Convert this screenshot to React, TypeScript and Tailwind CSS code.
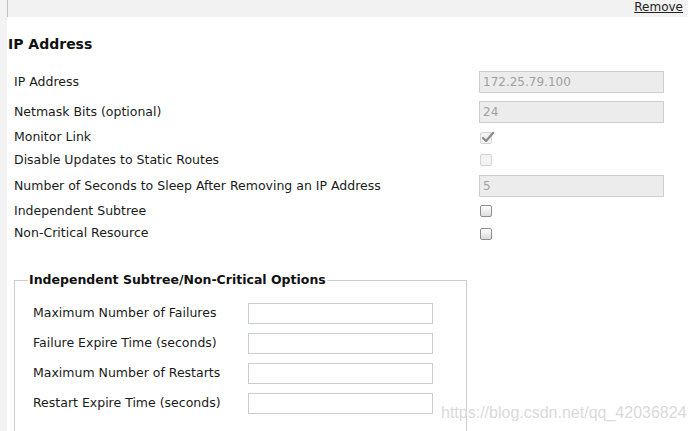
import React from "react";

const font = { fontFamily: '"DejaVu Sans", "Liberation Sans", sans-serif' };

function DisabledInput({ value }: { value: string }) {
  return (
    <div className="w-[185px] h-[22px] bg-[#ececec] border border-[#cdcdcd] flex items-center pl-[3px] text-[12px] text-[#a0a0a0]">
      {value}
    </div>
  );
}

function DisabledCheckbox({ checked }: { checked?: boolean }) {
  return (
    <div className="relative w-[12px] h-[12px] ml-[1px] rounded-[2px] border border-[#d4d4d4] bg-[#f3f3f3]">
      {checked && (
        <svg className="absolute left-[0px] top-[-3px]" width="14" height="14" viewBox="0 0 14 14">
          <path d="M2 8 L5 11 L12 3" fill="none" stroke="#8c8c8c" strokeWidth="2.4" strokeLinecap="round" strokeLinejoin="round" />
        </svg>
      )}
    </div>
  );
}

function Checkbox() {
  return (
    <div className="w-[12px] h-[12px] ml-[1px] rounded-[2px] border border-[#8e8e8e] bg-gradient-to-b from-[#ffffff] to-[#dcdcdc]" />
  );
}

function Row({ label, h, children }: { label: string; h: string; children: React.ReactNode }) {
  return (
    <div className={`flex items-center shrink-0 ${h}`}>
      <div className="w-[465px] text-[12.5px] text-[#1a1a1a]">{label}</div>
      {children}
    </div>
  );
}

function FieldRow({ label }: { label: string }) {
  return (
    <div className="flex items-center h-[30px] pl-[5px]">
      <div className="w-[215px] text-[12.5px] text-[#1a1a1a]">{label}</div>
      <div className="w-[185px] h-[21px] bg-white border border-[#c9cdd1]" />
    </div>
  );
}

export default function App() {
  return (
    <div className="relative w-[693px] h-[431px] overflow-hidden bg-white flex" style={font}>
      <div className="w-[7px] h-full bg-[#f3f3f3] shrink-0" />
      <div className="flex-1 block">
        <div className="h-[17px] mr-[5px] bg-[#f2f2f2] border-l border-[#c4c4c4] flex justify-end items-start pr-[5px]">
          <span className="text-[12px] leading-[14px] underline text-[#222]">Remove</span>
        </div>
        <h2 className="mt-[19px] pl-[1px] text-[14px] leading-[17px] font-bold text-[#111]">IP Address</h2>
        <div className="mt-[14px] pl-[7px] flex flex-col">
          <Row label="IP Address" h="h-[30px]">
            <DisabledInput value="172.25.79.100" />
          </Row>
          <Row label="Netmask Bits (optional)" h="h-[30px]">
            <DisabledInput value="24" />
          </Row>
          <Row label="Monitor Link" h="h-[21px]">
            <DisabledCheckbox checked />
          </Row>
          <Row label="Disable Updates to Static Routes" h="h-[24px]">
            <DisabledCheckbox />
          </Row>
          <Row label="Number of Seconds to Sleep After Removing an IP Address" h="h-[28px]">
            <DisabledInput value="5" />
          </Row>
          <Row label="Independent Subtree" h="h-[22px]">
            <Checkbox />
          </Row>
          <Row label="Non-Critical Resource" h="h-[23px]">
            <Checkbox />
          </Row>
        </div>
        <fieldset className="mt-[28px] ml-[7px] w-[453px] h-[200px] border border-[#c9cdd1] pl-[13px]">
          <legend className="px-[1px] text-[12.5px] leading-[14px] font-bold text-[#111]">
            Independent Subtree/Non-Critical Options
          </legend>
          <div className="pt-[11px] flex flex-col">
            <FieldRow label="Maximum Number of Failures" />
            <FieldRow label="Failure Expire Time (seconds)" />
            <FieldRow label="Maximum Number of Restarts" />
            <FieldRow label="Restart Expire Time (seconds)" />
          </div>
        </fieldset>
      </div>
      <div
        className="absolute left-[441px] top-[404px] text-[16px] leading-[18px] text-[#dadada]"
        style={{ fontFamily: '"Liberation Sans", Arial, sans-serif' }}
      >
        https://blog.csdn.net/qq_42036824
      </div>
    </div>
  );
}
